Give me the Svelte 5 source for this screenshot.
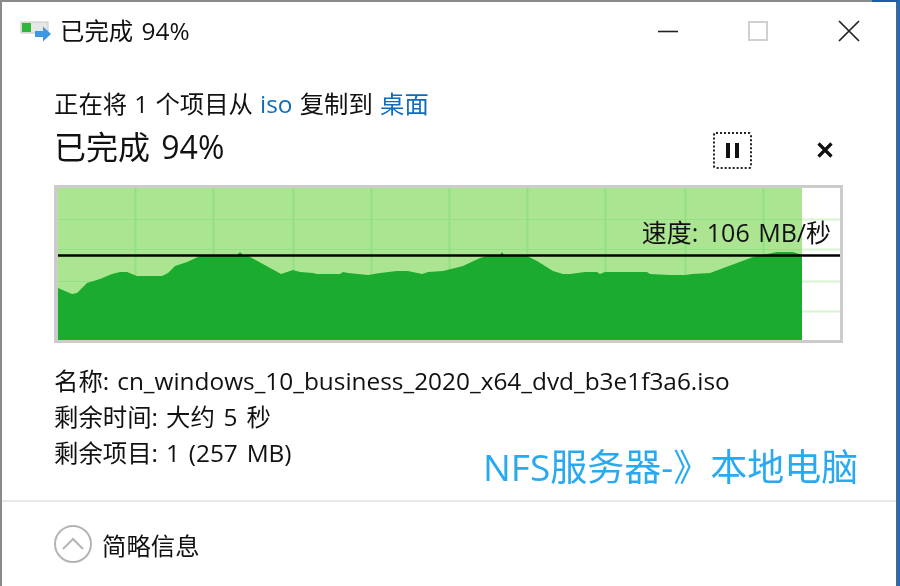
<script lang="ts">
  // Windows copy-progress dialog. Graph outline is sampled from the reference.
  const grid = { v: [135, 213, 293, 371, 449, 527, 605, 685, 763], h: [219, 249, 281, 311] };
  const left = 58;
  const top = 188;
  const profile = [
    [58, 288], [72, 294], [77, 293], [87, 283], [100, 279], [112, 274], [120, 272], [127, 272],
    [137, 276], [162, 276], [168, 273], [175, 266], [187, 262], [200, 256], [237, 255], [240, 252],
    [243, 255], [250, 257], [281, 274], [293, 270], [300, 272], [313, 273], [317, 274], [340, 274],
    [343, 272], [348, 273], [368, 275], [380, 273], [397, 271], [408, 271], [422, 274], [428, 272],
    [443, 271], [463, 266], [480, 258], [487, 256], [500, 255], [502, 252], [504, 255], [527, 256],
    [537, 261], [553, 271], [563, 274], [570, 274], [585, 272], [597, 272], [600, 274], [605, 272],
    [647, 272], [650, 274], [670, 275], [685, 275], [692, 274], [710, 273], [753, 257], [777, 252],
    [793, 252], [802, 255],
  ];
  const area =
    'M0 152 ' + profile.map(([x, y]) => `L${x - left} ${y - top}`).join(' ') + ` L${802 - left} 152 Z`;
</script>

<div class="window">
  <header class="titlebar">
    <svg class="app-icon" width="34" height="24" viewBox="0 0 34 24">
      <rect x="1" y="1" width="27" height="11" fill="#e6e6e6" stroke="#c8c8c8" />
      <rect x="2" y="2" width="9" height="9" fill="#2fb63c" />
      <path d="M15 10h8V5.5l8 7.5-8 7.5V16h-8z" fill="#3d97e3" />
    </svg>
    <span class="title">已完成 94%</span>
    <div class="controls">
      <svg width="20" height="20" viewBox="0 0 20 20"><path d="M0 10.5h20" stroke="#222" stroke-width="1.6" /></svg>
      <svg width="20" height="20" viewBox="0 0 20 20"><rect x="1" y="1" width="18" height="18" fill="none" stroke="#d0d0d0" stroke-width="2" /></svg>
      <svg width="22" height="22" viewBox="0 0 22 22"><path d="M1 1l20 20M21 1L1 21" stroke="#222" stroke-width="1.7" /></svg>
    </div>
  </header>

  <main class="content">
    <p class="route">正在将 1 个项目从 <span class="link">iso</span> 复制到 <span class="link">桌面</span></p>
    <div class="progress-row">
      <h1>已完成 94%</h1>
      <button class="pause" aria-label="暂停"><i></i><i></i></button>
      <button class="cancel" aria-label="取消">
        <svg width="16" height="16" viewBox="0 0 16 16"><path d="M1.5 1.5l13 13M14.5 1.5l-13 13" stroke="#111" stroke-width="3.2" /></svg>
      </button>
    </div>

    <div class="graph">
      <svg width="782" height="152" viewBox="0 0 782 152">
        <rect width={802 - left} height="152" fill="#ace591" />
        {#each grid.h as y}
          <path d="M0 {y - top + 0.5}H782" stroke="#d9f4d0" stroke-width="2" />
          <path d="M0 {y - top + 0.5}H{802 - left}" stroke="#93e07f" stroke-width="2" />
        {/each}
        {#each grid.v as x}
          <path d="M{x - left + 0.5} 0V152" stroke="#93e07f" stroke-width="2" />
        {/each}
        <path d={area} fill="#1bab2e" />
        <path d="M0 67.5H782" stroke="#000" stroke-width="2.4" />
      </svg>
      <span class="speed">速度: 106 MB/秒</span>
    </div>

    <dl class="details">
      <div><dt>名称:</dt><dd>cn_windows_10_business_2020_x64_dvd_b3e1f3a6.iso</dd></div>
      <div><dt>剩余时间:</dt><dd>大约 5 秒</dd></div>
      <div><dt>剩余项目:</dt><dd>1 (257 MB)</dd></div>
    </dl>
    <span class="note">NFS服务器-》本地电脑</span>
  </main>

  <footer class="footer">
    <svg width="38" height="38" viewBox="0 0 38 38">
      <circle cx="19" cy="19" r="18" fill="none" stroke="#b4b4b4" stroke-width="2" />
      <path d="M9 24l10-10 10 10" fill="none" stroke="#b4b4b4" stroke-width="2" />
    </svg>
    <span>简略信息</span>
  </footer>
</div>

<style>
  :global(body) {
    margin: 0;
    background: #1a6cc0;
  }
  .window {
    box-sizing: border-box;
    width: 898px;
    height: 586px;
    position: relative;
    display: flex;
    flex-direction: column;
    background: #fff;
    border-top: 2px solid #8a8a8a;
    border-left: 2px solid #8a8a8a;
    border-right: 2px solid #46688c;
    font-family: "Open Sans", "Noto Sans CJK SC", sans-serif;
    font-size: 24.4px;
    color: #111;
    filter: blur(0.45px);
  }
  /* desktop showing through at the top right corner */
  .window::after {
    content: "";
    position: absolute;
    top: -2px;
    right: -2px;
    width: 26px;
    height: 2px;
    background: #1a5fa8;
  }
  .titlebar {
    height: 58px;
    display: flex;
    align-items: center;
    padding: 0 36px 0 18px;
  }
  .app-icon {
    margin-right: 6px;
    margin-top: 4px;
  }
  .title {
    flex: 1;
    margin-top: -4px;
    word-spacing: 2px;
  }
  .controls {
    display: flex;
    align-items: center;
    gap: 70px;
  }
  .content {
    position: relative;
    flex: 1;
    padding: 26px 0 0 52px;
  }
  .route {
    margin: 0;
    line-height: 36px;
    word-spacing: 0.8px;
  }
  .link {
    color: #0f6cbd;
  }
  .progress-row {
    display: flex;
    align-items: center;
    height: 50px;
    padding-right: 62px;
  }
  h1 {
    flex: 1;
    margin: 0;
    font-size: 32px;
    font-weight: 400;
    line-height: 50px;
    word-spacing: 3px;
  }
  button {
    padding: 0;
    background: none;
    border: 0;
    display: flex;
    align-items: center;
    justify-content: center;
  }
  .pause {
    box-sizing: border-box;
    width: 39px;
    height: 37px;
    gap: 5px;
    margin: 6px 64px 0 0;
    border: 2px dotted #222;
    border-radius: 3px;
  }
  .pause i {
    width: 4px;
    height: 15px;
    background: #111;
  }
  .cancel {
    width: 18px;
    height: 18px;
    margin-top: 6px;
  }
  .graph {
    position: relative;
    box-sizing: border-box;
    width: 789px;
    height: 158px;
    margin-top: 13px;
    border: 3px solid #cccccc;
    border-left-width: 4px;
    background: #fff;
    line-height: 0;
  }
  .speed {
    position: absolute;
    right: 9px;
    top: 27px;
    line-height: 34px;
    font-size: 25px;
    word-spacing: 2px;
  }
  .details {
    margin: 20px 0 0;
    line-height: 36px;
  }
  .details div {
    display: flex;
    gap: 8px;
  }
  dt,
  dd {
    margin: 0;
  }
  dd {
    word-spacing: 2.5px;
  }
  .note {
    position: absolute;
    left: 481px;
    top: 383px;
    font-size: 37px;
    line-height: 48px;
    color: #29aaf0;
  }
  .footer {
    height: 86px;
    box-sizing: border-box;
    display: flex;
    align-items: center;
    gap: 10px;
    padding-left: 52px;
    border-top: 2px solid #e8e8e8;
  }
</style>
